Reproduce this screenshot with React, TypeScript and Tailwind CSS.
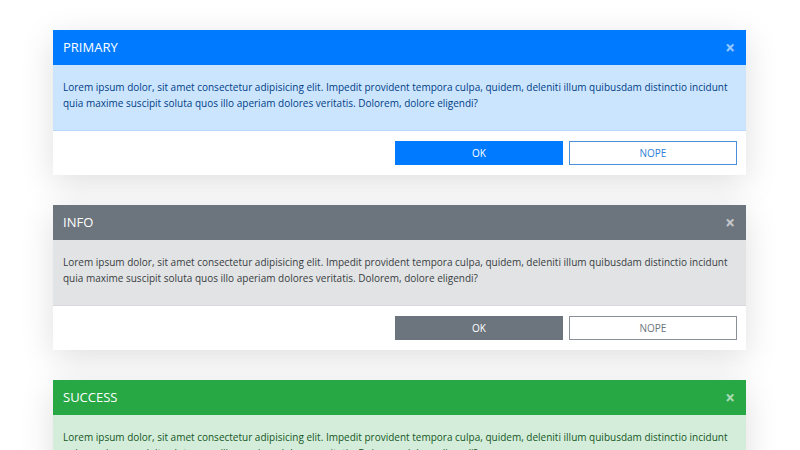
import React from 'react';

const text =
  'Lorem ipsum dolor, sit amet consectetur adipisicing elit. Impedit provident tempora culpa, quidem, deleniti illum quibusdam distinctio incidunt quia maxime suscipit soluta quos illo aperiam dolores veritatis. Dolorem, dolore eligendi?';

const variants = [
  {
    title: 'PRIMARY',
    head: 'bg-[#007bff]',
    body: 'bg-[#cce5ff] text-[#004085] border-[#b8daff]',
    ok: 'bg-[#007bff]',
    nope: 'border-[#4a90d9] text-[#2f7fd6]',
  },
  {
    title: 'INFO',
    head: 'bg-[#6c757d]',
    body: 'bg-[#e2e3e5] text-[#383d41] border-[#d6d8db]',
    ok: 'bg-[#6c757d]',
    nope: 'border-[#8a9097] text-[#6c757d]',
  },
  {
    title: 'SUCCESS',
    head: 'bg-[#28a745]',
    body: 'bg-[#d4edda] text-[#155724] border-[#c3e6cb]',
    ok: 'bg-[#28a745]',
    nope: 'border-[#5cb870] text-[#28a745]',
  },
];

const Card = ({ v }: { v: (typeof variants)[number] }) => (
  <div className="bg-white shadow-[0_8px_32px_rgba(0,0,0,0.13)]">
    <div className={`${v.head} h-[35px] px-[10px] flex items-center justify-between text-white`}>
      <span className="text-[13px]">{v.title}</span>
      <span className="text-[17px] font-bold opacity-60 leading-none mr-[1px]">×</span>
    </div>
    <div className={`${v.body} border-b px-[10px] pt-[14px] pb-[19px] text-[10px] leading-4`}>
      {text}
    </div>
    <div className="flex justify-end gap-[6px] px-[9px] py-[10px]">
      <button className={`${v.ok} w-[168px] h-[24px] text-white text-[10px]`}>OK</button>
      <button className={`${v.nope} w-[168px] h-[24px] border bg-white text-[10px]`}>NOPE</button>
    </div>
  </div>
);

export default function App() {
  return (
    <div
      className="w-[800px] h-[450px] overflow-hidden bg-white"
      style={{ fontFamily: '"Open Sans", sans-serif' }}
    >
      <div className="flex flex-col gap-[30px] pt-[30px] pl-[53px] w-[746px]">
        {variants.map((v) => (
          <Card key={v.title} v={v} />
        ))}
      </div>
    </div>
  );
}
